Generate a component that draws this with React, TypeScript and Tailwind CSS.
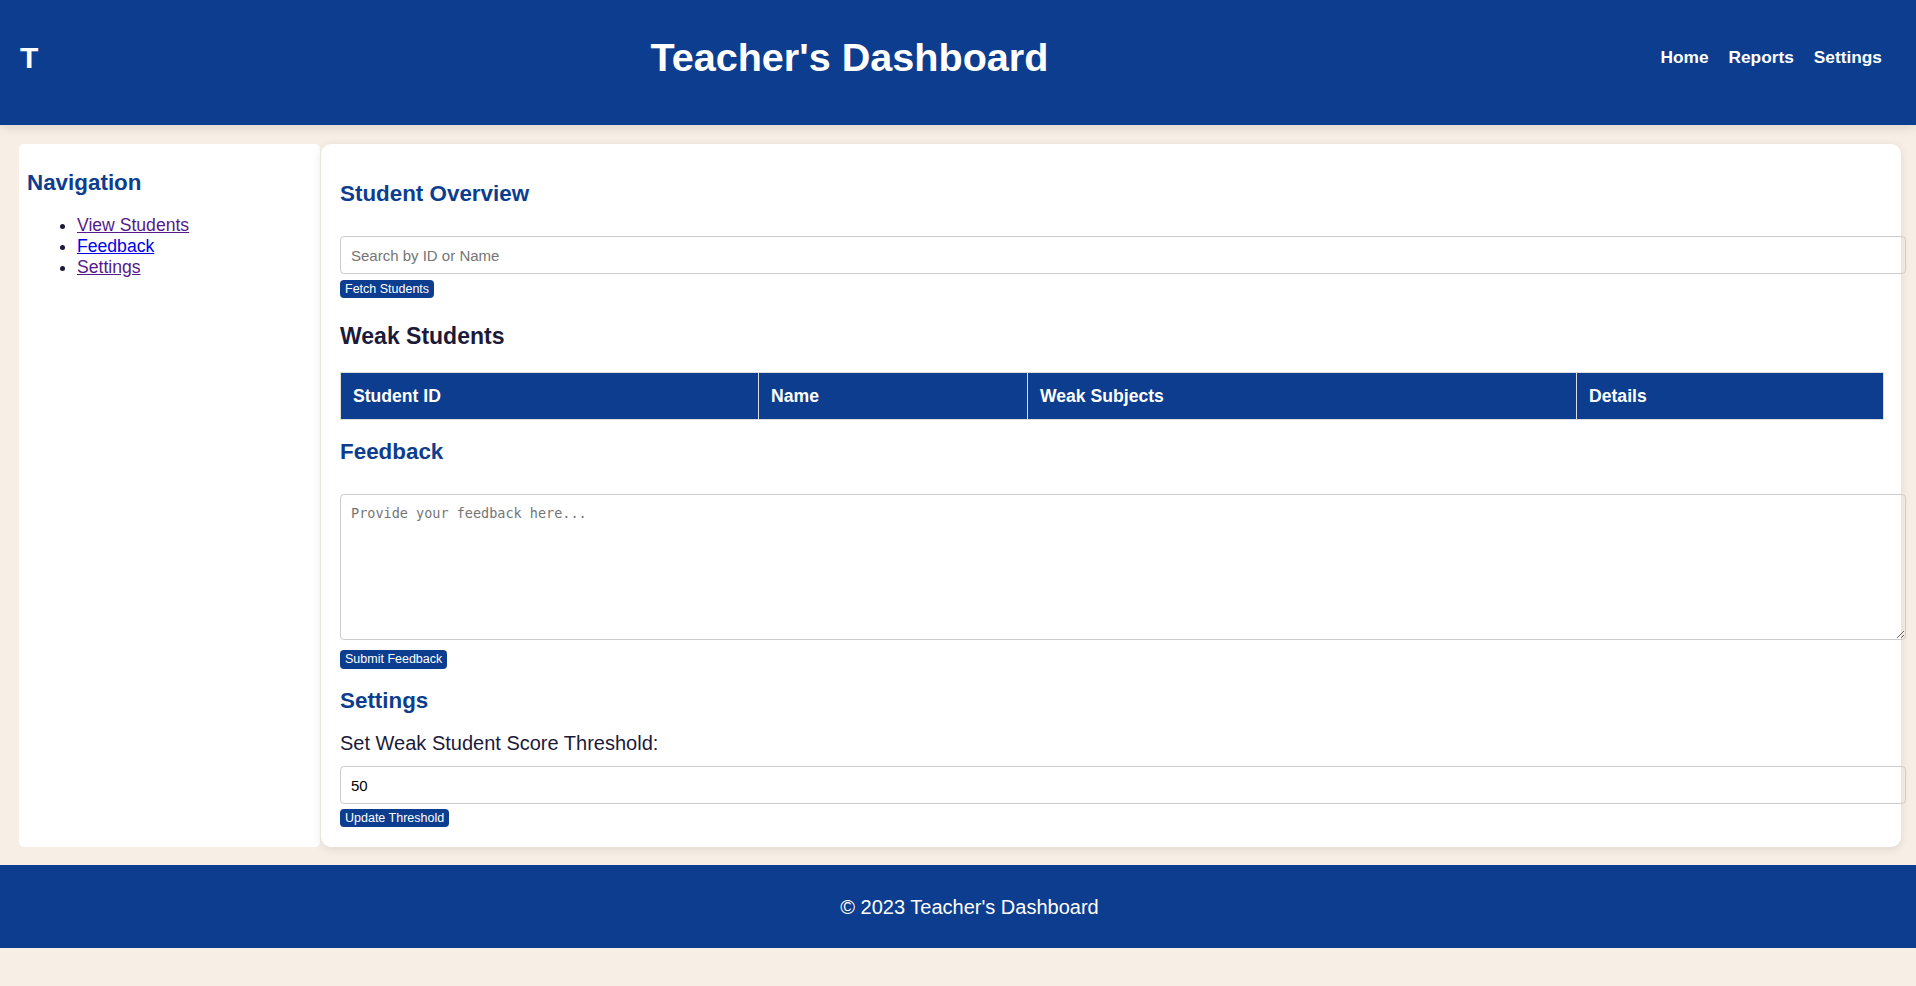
import React from "react";

const font = { fontFamily: '"Liberation Sans", Arial, Helvetica, sans-serif' };

function Btn({ children }: { children: React.ReactNode }) {
  return (
    <button className="block h-[18px] rounded-[4px] bg-[#0d3d8f] px-[5px] text-[12.5px] leading-[18px] text-white">
      {children}
    </button>
  );
}

export default function App() {
  return (
    <div style={font} className="min-h-screen bg-[#f7efe5] text-[#1c1a3b]">
      <header className="relative z-10 flex h-[125px] items-center justify-between bg-[#0d3d8f] pl-[20px] pr-[34px] pb-[10px] text-white shadow-[0_2px_10px_rgba(0,0,0,0.12)]">
        <div className="text-[30px] font-bold leading-none">T</div>
        <h1 className="text-[39.6px] font-bold leading-none">Teacher's Dashboard</h1>
        <nav className="flex gap-[20px] text-[17.3px] font-bold">
          <a>Home</a>
          <a>Reports</a>
          <a>Settings</a>
        </nav>
      </header>

      <div className="flex pl-[19px] pr-[15px] pt-[19px] pb-[18px]">
        <aside className="w-[301px] shrink-0 rounded-[5px] bg-white px-[8px] pt-[26px]">
          <h2 className="text-[22.4px] font-bold leading-[26px] text-[#0d3d8f]">Navigation</h2>
          <ul className="mt-[19px] list-disc pl-[50px] text-[17.6px] leading-[21px] marker:text-[#1c1a3b]">
            <li>
              <a className="text-[#551a8b] underline">View Students</a>
            </li>
            <li>
              <a className="text-[#0000ee] underline">Feedback</a>
            </li>
            <li>
              <a className="text-[#551a8b] underline">Settings</a>
            </li>
          </ul>
        </aside>

        <main className="ml-px flex-1 rounded-[10px] bg-white py-[20px] pl-[19px] pr-[20px] shadow-[0_2px_10px_rgba(0,0,0,0.1)]">
          <h2 className="mt-[17px] text-[22.4px] font-bold leading-[26px] text-[#0d3d8f]">Student Overview</h2>
          <input
            placeholder="Search by ID or Name"
            className="mt-[29px] block h-[38px] w-[calc(100%+25px)] rounded-[4px] border border-[#cccccc] px-[10px] text-[15px] placeholder:text-[#757575] outline-none"
          />
          <div className="mt-[6px]">
            <Btn>Fetch Students</Btn>
          </div>

          <h3 className="mt-[25px] text-[23px] font-bold leading-[26px] text-[#1c1a3b]">Weak Students</h3>
          <table className="mt-[23px] w-[calc(100%+3px)] table-fixed border-collapse">
            <thead>
              <tr className="bg-[#0d3d8f] text-left text-[17.6px] font-bold leading-[22px] text-white">
                <th className="w-[418px] border border-[#dddddd] px-[12px] py-[12px]">Student ID</th>
                <th className="w-[269px] border border-[#dddddd] px-[12px] py-[12px]">Name</th>
                <th className="w-[549px] border border-[#dddddd] px-[12px] py-[12px]">Weak Subjects</th>
                <th className="border border-[#dddddd] px-[12px] py-[12px]">Details</th>
              </tr>
            </thead>
          </table>

          <h2 className="mt-[19px] text-[22.4px] font-bold leading-[26px] text-[#0d3d8f]">Feedback</h2>
          <textarea
            placeholder="Provide your feedback here..."
            style={{ fontFamily: '"DejaVu Sans Mono", "Liberation Mono", monospace' }}
            className="mt-[29px] block h-[146px] w-[calc(100%+25px)] rounded-[4px] border border-[#cccccc] px-[10px] py-[10px] text-[13.5px] leading-[16px] placeholder:text-[#757575] outline-none"
          />
          <div className="mt-[10px]">
            <button className="block h-[19px] rounded-[4px] bg-[#0d3d8f] px-[5px] text-[12.5px] leading-[19px] text-white">
              Submit Feedback
            </button>
          </div>

          <h2 className="mt-[19px] text-[22.4px] font-bold leading-[26px] text-[#0d3d8f]">Settings</h2>
          <label className="mt-[18px] block text-[20px] leading-[23px] text-[#1c1a3b]">
            Set Weak Student Score Threshold:
          </label>
          <input
            defaultValue="50"
            className="mt-[11px] block h-[38px] w-[calc(100%+25px)] rounded-[4px] border border-[#cccccc] px-[10px] text-[15px] text-black outline-none"
          />
          <div className="mt-[5px]">
            <Btn>Update Threshold</Btn>
          </div>
        </main>
      </div>

      <footer className="flex h-[83px] items-center justify-center bg-[#0d3d8f] pl-[23px] text-[20px] text-white">
        <p>© 2023 Teacher's Dashboard</p>
      </footer>
    </div>
  );
}
